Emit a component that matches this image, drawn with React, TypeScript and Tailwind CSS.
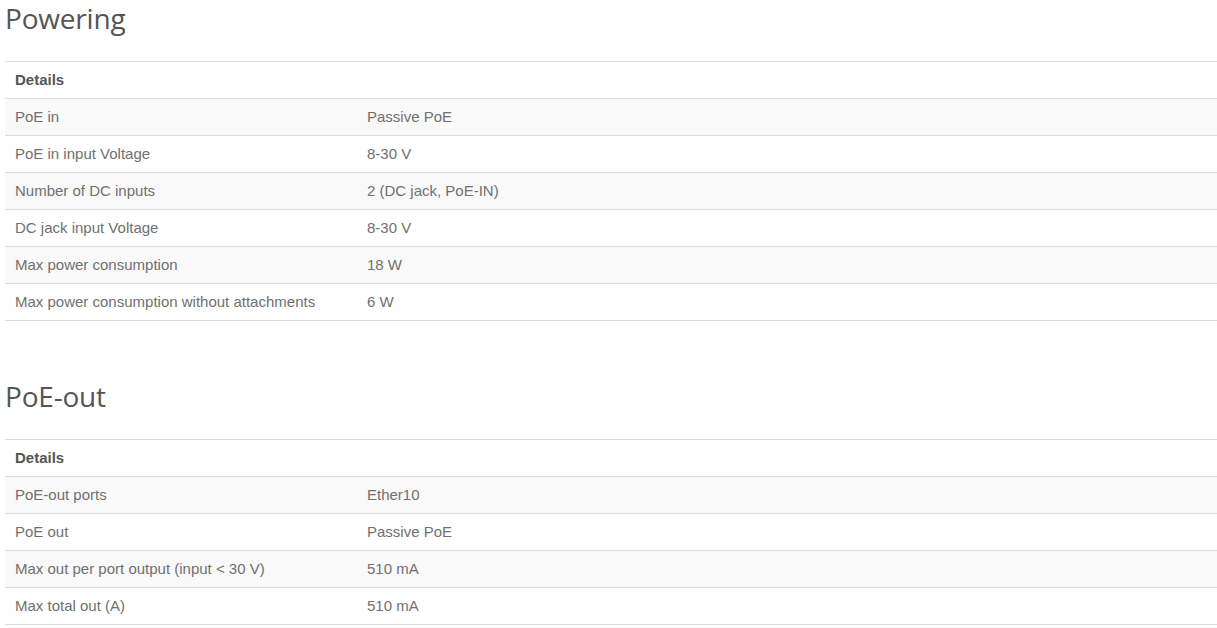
const sections = [
  {
    title: 'Powering',
    rows: [
      ['PoE in', 'Passive PoE'],
      ['PoE in input Voltage', '8-30 V'],
      ['Number of DC inputs', '2 (DC jack, PoE-IN)'],
      ['DC jack input Voltage', '8-30 V'],
      ['Max power consumption', '18 W'],
      ['Max power consumption without attachments', '6 W'],
    ],
  },
  {
    title: 'PoE-out',
    rows: [
      ['PoE-out ports', 'Ether10'],
      ['PoE out', 'Passive PoE'],
      ['Max out per port output (input < 30 V)', '510 mA'],
      ['Max total out (A)', '510 mA'],
    ],
  },
];

const SpecTable = ({ title, rows }: { title: string; rows: string[][] }) => (
  <section className="mb-[57px]">
    <h2 className="pt-[3px] text-[28px] leading-[31px] text-[#555] font-['Open_Sans',sans-serif] tracking-[-0.2px]">
      {title}
    </h2>
    <table className="mt-[27px] w-full border-collapse text-[15px] leading-[20px] text-[#707070] font-['Liberation_Sans',Arial,sans-serif]">
      <thead>
        <tr className="border-t border-[#ddd]">
          <th className="px-[10px] py-[8px] text-left font-bold text-[#555]" colSpan={2}>
            Details
          </th>
        </tr>
      </thead>
      <tbody>
        {rows.map(([label, value], i) => (
          <tr
            key={label}
            className={`border-t border-[#ddd] ${i === rows.length - 1 ? 'border-b' : ''} ${
              i % 2 === 0 ? 'bg-[#f9f9f9]' : 'bg-white'
            }`}
          >
            <td className="w-[352px] px-[10px] py-[8px]">{label}</td>
            <td className="px-[10px] py-[8px]">{value}</td>
          </tr>
        ))}
      </tbody>
    </table>
  </section>
);

export default function App() {
  return (
    <div className="min-h-screen bg-white pl-[5px]">
      {sections.map(s => (
        <SpecTable key={s.title} title={s.title} rows={s.rows} />
      ))}
    </div>
  );
}
